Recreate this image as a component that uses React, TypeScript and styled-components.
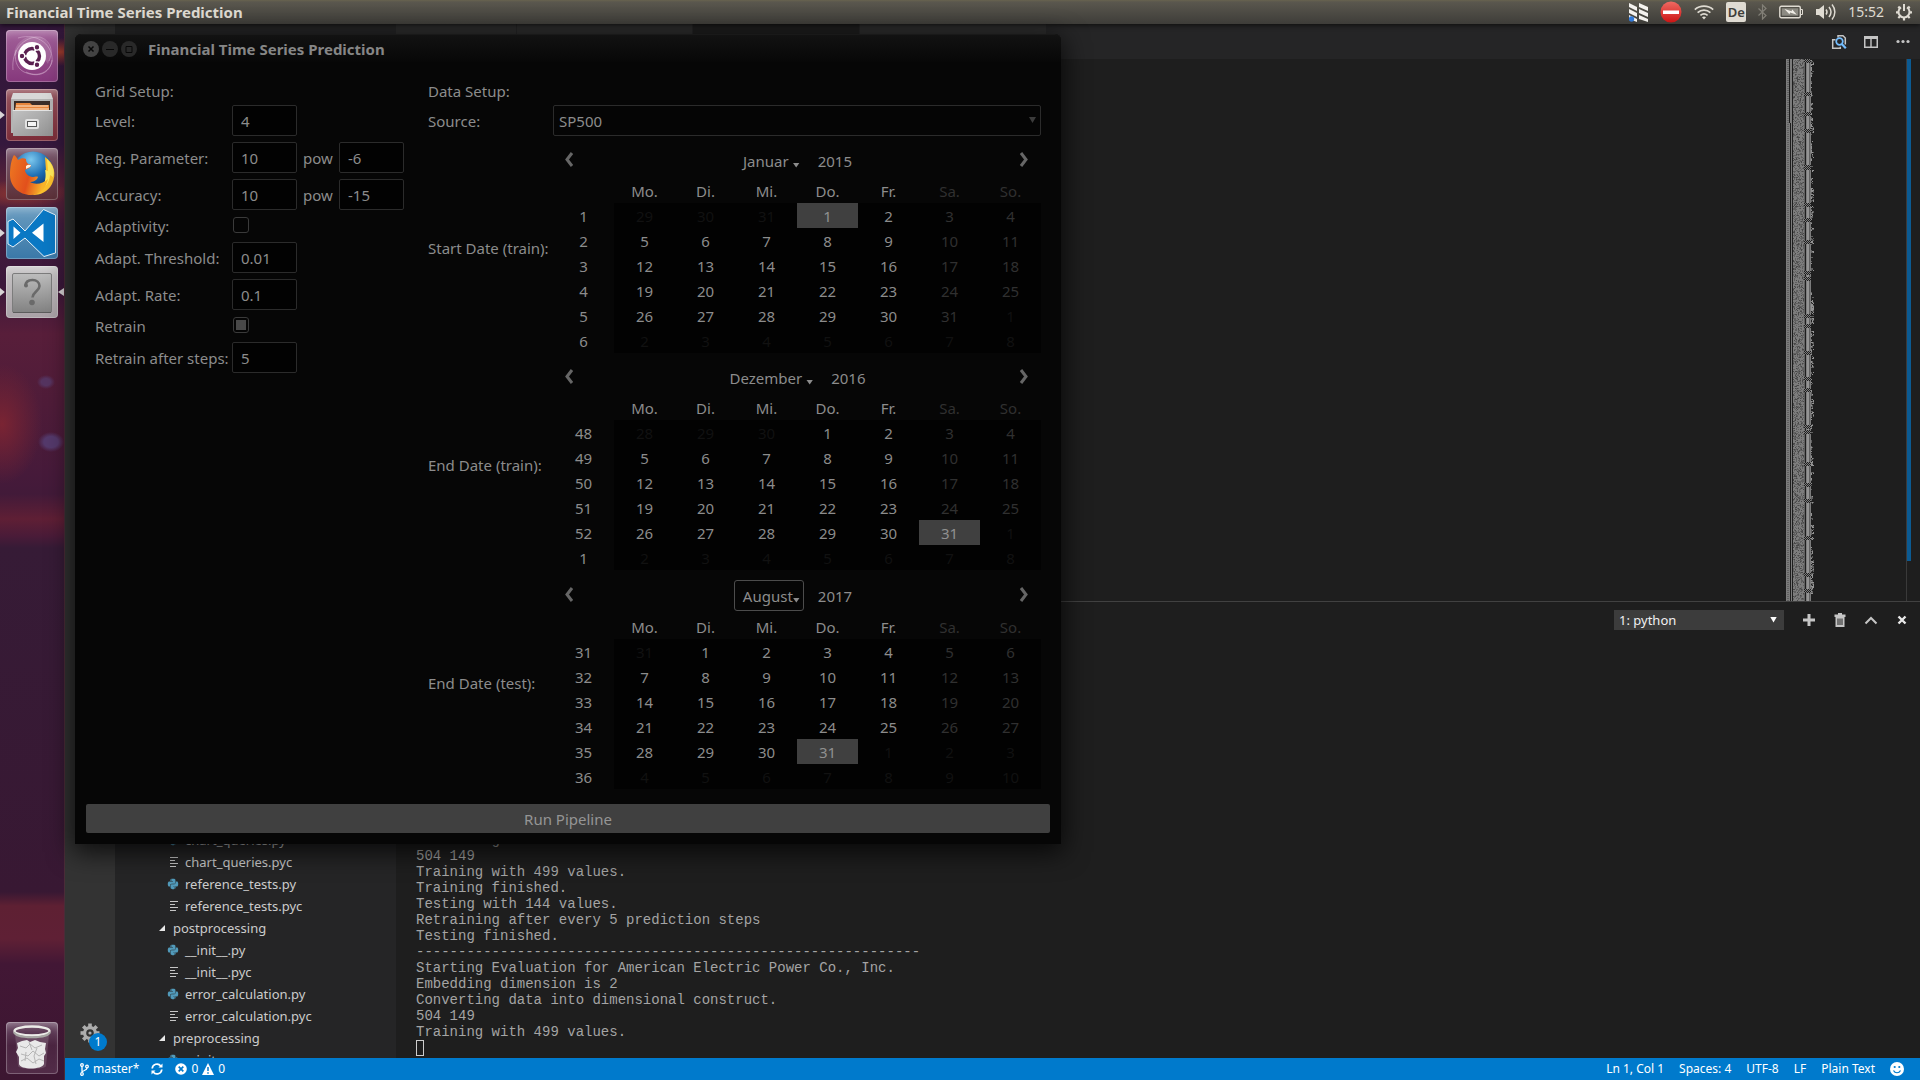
import React from "react";
import styled, { createGlobalStyle, css } from "styled-components";
import { FaPython } from "react-icons/fa";

const GlobalStyle = createGlobalStyle`
  *, *::before, *::after { box-sizing: border-box; }
  body { margin: 0; background: #1e1e1e; overflow: hidden; }
  button, input, select { font: inherit; color: inherit; margin: 0; }
`;

/* ---------- desktop shell ---------- */

const Desktop = styled.div`
  position: relative;
  display: flex;
  flex-direction: column;
  height: 100vh;
  overflow: hidden;
  font-family: "Noto Sans", sans-serif;
  font-size: 14px;
  line-height: 18px;
  color: #dfdbd2;
`;

const TopBar = styled.header`
  position: relative;
  z-index: 1;
  display: flex;
  align-items: center;
  justify-content: space-between;
  flex: none;
  height: 24px;
  padding: 0 8px 0 6px;
  background: linear-gradient(#68634f 0, #5a574e 2px, #3e3d39 100%);
  box-shadow: 0 1px 5px rgba(0, 0, 0, 0.7);
`;

const TopTitle = styled.h1`
  margin: 0;
  font-size: 15px;
  font-weight: 700;
  line-height: 18px;
`;

const Tray = styled.div`
  display: flex;
  align-items: center;
  gap: 12px;

  svg { display: block; }
`;

const KeyboardLayout = styled.button`
  width: 20px;
  height: 20px;
  padding: 0;
  border: 0;
  border-radius: 2px;
  background: #dfdbd2;
  color: #403e3a;
  font-size: 13px;
  font-weight: 600;
  line-height: 20px;
`;

const Workspace = styled.div`
  display: flex;
  flex: 1;
  min-height: 0;
`;

const Launcher = styled.nav`
  display: flex;
  flex-direction: column;
  gap: 7px;
  flex: none;
  width: 65px;
  padding: 6px 6px 6px 0;
  border-right: 1px solid #4a2c38;
  background:
    radial-gradient(9px 7px at 46px 358px, #553460 50%, transparent),
    radial-gradient(13px 10px at 51px 418px, #54396b 55%, transparent),
    radial-gradient(40px 60px at 2px 400px, #7a2433, transparent),
    radial-gradient(40px 14px at 60px 28px, #9b3a2c, transparent),
    radial-gradient(50px 14px at 20px 170px, #8c3430, transparent),
    linear-gradient(
      #33173a 0,
      #35183d 120px,
      #5d2438 165px,
      #431c3d 200px,
      #3b183b 260px,
      #581e3a 310px,
      #4f1c39 380px,
      #461a3a 450px,
      #421a39 470px,
      #5f1f35 495px,
      #4a1b38 512px,
      #361b36 524px,
      #381833 868px,
      #5e2033 882px,
      #5f2035 915px,
      #421735 940px,
      #3c1631 100%
    );
`;

const LaunchSlot = styled.div<{ $last?: boolean }>`
  display: flex;
  align-items: center;
  height: 52px;
  ${(p) => p.$last && css`margin-top: auto;`}
`;

const Pip = styled.span<{ $on?: boolean; $flip?: boolean }>`
  flex: none;
  width: 6px;
  height: 8px;
  background: ${(p) => (p.$on ? "#d8d4d6" : "transparent")};
  clip-path: ${(p) =>
    p.$flip ? "polygon(100% 0, 0 50%, 100% 100%)" : "polygon(0 0, 80% 50%, 0 100%)"};
`;

const Tile = styled.button<{ $bg: string }>`
  flex: none;
  width: 52px;
  height: 52px;
  padding: 0;
  border: 0;
  border-radius: 4px;
  background: ${(p) => p.$bg};
  box-shadow: inset 0 0 0 1px rgba(255, 255, 255, 0.25), inset 0 8px 10px -6px rgba(255, 255, 255, 0.4);

  svg { display: block; }
`;

/* ---------- code editor ---------- */

const Editor = styled.main`
  display: flex;
  flex-direction: column;
  flex: 1;
  min-width: 0;
  font-size: 12px;
`;

const EditorBody = styled.div`
  display: flex;
  flex: 1;
  min-height: 0;
`;

const ActivityBar = styled.aside`
  display: flex;
  flex-direction: column;
  justify-content: flex-end;
  align-items: center;
  flex: none;
  width: 50px;
  padding-bottom: 15px;
  background: #333333;
`;

const ManageButton = styled.button`
  position: relative;
  width: 20px;
  height: 20px;
  padding: 0;
  border: 0;
  background: none;

  svg { display: block; }
`;

const Badge = styled.span`
  position: absolute;
  left: 9px;
  top: 10px;
  width: 18px;
  height: 18px;
  border-radius: 9px;
  background: #007acc;
  color: #fff;
  font-size: 12px;
  line-height: 18px;
  text-align: center;
`;

const Sidebar = styled.aside`
  display: flex;
  flex-direction: column;
  justify-content: flex-end;
  flex: none;
  width: 281px;
  overflow: hidden;
  background: #252526;
`;

const Tree = styled.ul`
  margin: 0 0 -13px;
  padding: 0;
  list-style: none;
`;

const TreeRow = styled.li<{ $folder?: boolean }>`
  display: flex;
  align-items: center;
  gap: ${(p) => (p.$folder ? 8 : 6)}px;
  height: 22px;
  padding-left: ${(p) => (p.$folder ? 44 : 52)}px;
  color: #cccccc;
  font-size: 13px;
  line-height: 22px;
  white-space: nowrap;

  svg { flex: none; color: #519aba; }
`;

const MainColumn = styled.section`
  display: flex;
  flex-direction: column;
  flex: 1;
  min-width: 0;
  background: #1e1e1e;
`;

const TabStrip = styled.div`
  display: flex;
  flex: none;
  height: 35px;
  background: #252526;
`;

const Tab = styled.div<{ $width: number; $active?: boolean }>`
  width: ${(p) => p.$width}px;
  border-right: 1px solid #252526;
  background: ${(p) => (p.$active ? "#1e1e1e" : "#2d2d2d")};
`;

const TabActions = styled.div`
  display: flex;
  align-items: center;
  gap: 16px;
  margin-left: auto;
  padding-right: 9px;
`;

const IconButton = styled.button`
  display: flex;
  align-items: center;
  justify-content: center;
  width: 16px;
  height: 16px;
  padding: 0;
  border: 0;
  background: none;
  color: #c5c5c5;
`;

const CodeArea = styled.div`
  display: flex;
  justify-content: flex-end;
  flex: 1;
  min-height: 0;
  overflow: hidden;
`;

const Minimap = styled.div`
  width: 120px;

  svg { display: block; }
`;

const ScrollTrack = styled.div`
  width: 14px;
  border-left: 1px solid #3a3a3a;
`;

const ScrollMark = styled.div`
  width: 4px;
  height: 502px;
  background: #0b5a92;
`;

const Panel = styled.section`
  display: flex;
  flex-direction: column;
  justify-content: space-between;
  flex: none;
  height: 457px;
  border-top: 1px solid #414141;
  overflow: hidden;
`;

const PanelHeader = styled.div`
  display: flex;
  align-items: center;
  justify-content: flex-end;
  gap: 15px;
  height: 36px;
  padding-right: 10px;
`;

const SelectShell = styled.div<{ $grow?: boolean }>`
  position: relative;
  ${(p) => p.$grow && css`width: 100%;`}
`;

const TerminalSelect = styled.select`
  display: block;
  width: 170px;
  height: 20px;
  padding: 0 5px;
  border: 0;
  appearance: none;
  background: #3c3c3c;
  color: #f0f0f0;
  font-size: 13px;
  line-height: 20px;
`;

const SelectArrow = styled.span<{ $color: string; $right: number; $size: number }>`
  position: absolute;
  right: ${(p) => p.$right}px;
  top: 50%;
  margin-top: -${(p) => p.$size / 2}px;
  width: ${(p) => p.$size}px;
  height: ${(p) => p.$size - 1}px;
  background: ${(p) => p.$color};
  clip-path: polygon(0 0, 100% 0, 50% 100%);
  pointer-events: none;
`;

const PanelIcons = styled.div`
  display: flex;
  align-items: center;
  gap: 15px;
  padding-left: 2px;
`;

const Terminal = styled.pre`
  margin: 0;
  padding: 0 20px 2px;
  color: #a4a4a4;
  font-family: "Liberation Mono", monospace;
  font-size: 14px;
  line-height: 16px;
`;

const Cursor = styled.span`
  display: block;
  width: 8px;
  height: 16px;
  border: 1px solid #cccccc;
`;

const StatusBar = styled.footer`
  display: flex;
  align-items: center;
  justify-content: space-between;
  flex: none;
  height: 22px;
  padding: 0 16px 0 15px;
  background: #007acc;
  color: #ffffff;
  line-height: 22px;
`;

const StatusGroup = styled.div<{ $gap: number }>`
  display: flex;
  gap: ${(p) => p.$gap}px;
`;

const StatusItem = styled.button`
  display: flex;
  align-items: center;
  gap: 4px;
  padding: 0;
  border: 0;
  background: none;
  font-size: 12px;
  line-height: 22px;
`;

/* ---------- settings window ---------- */

const Window = styled.section`
  position: absolute;
  left: 75px;
  top: 34px;
  z-index: 2;
  width: 986px;
  border-radius: 6px 6px 0 0;
  background: #060606;
  color: #8c8c8c;
  font-size: 15px;
  box-shadow: 0 6px 26px 2px rgba(0, 0, 0, 0.75);
`;

const TitleBar = styled.header`
  display: flex;
  align-items: center;
  gap: 3px;
  height: 28px;
  padding: 0 8px;
  border-top: 1px solid #191919;
  border-radius: 6px 6px 0 0;
  background: linear-gradient(#121212, #070707);
`;

const WindowButton = styled.button<{ $strong?: boolean }>`
  display: flex;
  align-items: center;
  justify-content: center;
  width: 16px;
  height: 16px;
  padding: 0;
  border: 0;
  border-radius: 8px;
  background: ${(p) => (p.$strong ? "#434343" : "#292929")};
  color: #080808;
`;

const WindowTitle = styled.h2`
  margin: 0 0 0 8px;
  color: #868686;
  font-size: 15px;
  font-weight: 700;
  line-height: 18px;
`;

const Form = styled.form`
  display: flex;
  flex-direction: column;
  gap: 15px;
  padding: 19px 11px 11px;
`;

const Columns = styled.div`
  display: flex;
  gap: 24px;
  padding: 0 9px;
`;

const GridSetup = styled.div`
  display: grid;
  grid-template-columns: 131px 65px 30px 65px;
  align-content: start;
  align-items: center;
  gap: 6px;
`;

const DataSetup = styled.div`
  display: grid;
  grid-template-columns: 119px 1fr;
  align-content: start;
  align-items: center;
  gap: 6px;
  flex: 1;
`;

const Heading = styled.h3`
  grid-column: 1 / -1;
  height: 18px;
  margin: 0;
  font-size: 15px;
  font-weight: 400;
  line-height: 20px;
`;

const Label = styled.label`
  grid-column: 1;
  white-space: nowrap;
`;

const Pow = styled.span`
  text-align: center;
`;

const Field = styled.input`
  width: 100%;
  height: 31px;
  padding: 0 8px;
  border: 1px solid #2b2b2b;
  border-radius: 2px;
  background: #020202;
`;

const Check = styled.input`
  display: flex;
  align-items: center;
  justify-content: center;
  width: 16px;
  height: 16px;
  appearance: none;
  border: 1px solid #3a3a3a;
  border-radius: 3px;
  background: #050505;

  &:checked::before {
    content: "";
    width: 10px;
    height: 10px;
    background: #484848;
  }
`;

const CheckRow = styled.div`
  display: flex;
  height: 20px;
  padding: 1px;
`;

const SourceSelect = styled.select`
  display: block;
  width: 100%;
  height: 31px;
  padding: 0 5px;
  border: 1px solid #2b2b2b;
  border-radius: 2px;
  appearance: none;
  background: #050505;
`;

const CalendarNav = styled.div<{ $focused?: boolean }>`
  display: flex;
  align-items: center;
  justify-content: space-between;
  height: ${(p) => (p.$focused ? 38 : 36)}px;
  padding: 0 11px;
`;

const StepButton = styled.button`
  width: 12px;
  height: 20px;
  padding: 0;
  border: 0;
  background: none;

  svg { display: block; }
`;

const MonthYear = styled.div`
  display: flex;
  align-items: center;
  gap: 6px;
`;

const MonthButton = styled.button<{ $focused?: boolean }>`
  position: relative;
  height: 31px;
  padding: 2px ${(p) => (p.$focused ? 10 : 14)}px 0 8px;
  border: 1px solid ${(p) => (p.$focused ? "#4c4c4c" : "transparent")};
  border-radius: 3px;
  background: none;
`;

const MonthArrow = styled.span`
  position: absolute;
  right: 3px;
  top: 17px;
  width: 7px;
  height: 5px;
  background: #8c8c8c;
  clip-path: polygon(0 0, 100% 0, 50% 100%);
`;

const YearButton = styled.button`
  height: 31px;
  padding: 2px 8px 0;
  border: 0;
  background: none;
`;

const CalendarTable = styled.table`
  width: 100%;
  table-layout: fixed;
  border-collapse: collapse;
  text-align: center;
`;

const cellSize = css`
  height: 25px;
  padding: 0;
  font-weight: 400;
  line-height: 18px;
`;

const HeadCell = styled.th<{ $dim?: boolean }>`
  ${cellSize}
  color: ${(p) => (p.$dim ? "#303030" : "#8c8c8c")};
`;

type Tone = "plain" | "weekend" | "outside" | "selected";

const dayColor: Record<Tone, string> = {
  plain: "#8c8c8c",
  weekend: "#303030",
  outside: "#111111",
  selected: "#909090",
};

const DayCell = styled.td<{ $tone: Tone }>`
  ${cellSize}
  background: ${(p) => (p.$tone === "selected" ? "#404040" : "#020202")};
  color: ${(p) => dayColor[p.$tone]};
`;

const RunButton = styled.button`
  height: 29px;
  padding: 0;
  border: 0;
  border-radius: 2px;
  background: #404040;
  color: #959595;
`;

/* ---------- data ---------- */

const WEEKDAYS = ["Mo.", "Di.", "Mi.", "Do.", "Fr.", "Sa.", "So."];

type CalendarProps = {
  month: string;
  year: number;
  weeks: number[];
  lead: number[];
  length: number;
  selected: number;
  focused?: boolean;
};

const TREE: { name: string; kind: "py" | "pyc" | "folder" }[] = [
  { name: "chart_queries.py", kind: "py" },
  { name: "chart_queries.pyc", kind: "pyc" },
  { name: "reference_tests.py", kind: "py" },
  { name: "reference_tests.pyc", kind: "pyc" },
  { name: "postprocessing", kind: "folder" },
  { name: "__init__.py", kind: "py" },
  { name: "__init__.pyc", kind: "pyc" },
  { name: "error_calculation.py", kind: "py" },
  { name: "error_calculation.pyc", kind: "pyc" },
  { name: "preprocessing", kind: "folder" },
  { name: "__init__.py", kind: "py" },
];

const LOG = [
  "Converting data into dimensional construct.",
  "504 149",
  "Training with 499 values.",
  "Training finished.",
  "Testing with 144 values.",
  "Retraining after every 5 prediction steps",
  "Testing finished.",
  "-".repeat(60),
  "Starting Evaluation for American Electric Power Co., Inc.",
  "Embedding dimension is 2",
  "Converting data into dimensional construct.",
  "504 149",
  "Training with 499 values.",
].join("\n");

/* ---------- drawings ---------- */

/* Code overview: one path per shade, built from a seeded generator. */
function buildOverview(rows: number) {
  let seed = 7;
  const rnd = () => {
    seed = (seed * 1103515245 + 12345) % 2147483648;
    return seed / 2147483648;
  };
  const shades = ["", "", "", ""];
  const put = (s: number, x: number, y: number) => {
    shades[s] += `M${x} ${y}h1v1h-1z`;
  };
  let edge = 25;
  for (let y = 0; y < rows; y++) {
    const shift = y < 64 ? 0 : 1;
    const jumpy = y % 37 > 32 || y % 53 < 4;
    if (rnd() > 0.6) edge = 25 + Math.floor(rnd() * 4);
    for (let x = 0; x < edge; x++) {
      if (x < 3) put(y % 2 && x !== 0 ? 1 : 2, x, y);
      else if (x === 3 + shift || x === 6) continue;
      else if (x < 7) put(2, x, y);
      else if (x < 18) put(rnd() > 0.45 ? 2 : rnd() > 0.25 ? 1 : 0, x, y);
      else if (x < 25) {
        if (jumpy) { if ((x + y) % 2) put(2, x, y); }
        else if (x === 18) put(1, x, y);
        else if (x === 21 || x === 22) put(3, x, y);
        else if (x !== 19) put(x % 2 ? 1 : 2, x, y);
      } else if (rnd() > 0.35) put(rnd() > 0.5 ? 3 : 1, x, y);
    }
  }
  return shades;
}
const OVERVIEW = buildOverview(542);
const OVERVIEW_FILL = ["#484848", "#606060", "#7c7c7c", "#949494"];

const UbuntuIcon = () => (
  <svg width="52" height="52" viewBox="0 0 52 52" fill="none">
    <path d="M7 40C5 20 18 6 34 7c10 3 14 14 9 24M12 8c20-6 36 8 34 24-4 12-16 15-26 10M46 30c-2 14-14 18-28 12C10 38 8 28 10 20" stroke="#d9b3d3" strokeOpacity=".5" />
    <path d="M8 26C8 12 22 2 36 8c10 6 10 18 6 26L26 12z" fill="#fff" fillOpacity=".14" />
    <circle cx="26" cy="26" r="14" fill="#fff" />
    <circle cx="26" cy="26" r="7.5" stroke="#5a2050" strokeWidth="3.4" />
    <path d="M26 26L12 26M26 26L33 14M26 26L33 38" stroke="#fff" strokeWidth="1.6" />
    <circle cx="26" cy="26" r="5" fill="#fff" />
    <g fill="#5a2050" stroke="#fff" strokeWidth="1.2">
      <circle cx="16" cy="26" r="2.8" /><circle cx="31" cy="17.3" r="2.8" /><circle cx="31" cy="34.7" r="2.8" />
    </g>
  </svg>
);

const FilesIcon = () => (
  <svg width="52" height="52" viewBox="0 0 52 52">
    <defs>
      <linearGradient id="cab" x1="0" y1="0" x2="1" y2="1">
        <stop offset="0" stopColor="#c2c2c2" /><stop offset="1" stopColor="#929292" />
      </linearGradient>
    </defs>
    <path d="M7 4h38l2 6v34H5V10z" fill="#d8d8d8" />
    <path d="M5 10h42v34H5z" fill="#b4b4b4" />
    <path d="M8 12h36v10H8z" fill="#3a2c28" />
    <path d="M10 14h14l2 2h17v6H9z" fill="#e8863c" />
    <path d="M10 17h32M9 20h34" stroke="#fbe4cc" strokeWidth="1.2" />
    <path d="M6 21h40l1 2v24H7V23z" fill="url(#cab)" />
    <path d="M7 21.500h39" stroke="#e4e4e4" />
    <rect x="19" y="30" width="14" height="10" rx="2" fill="#e2e2e2" />
    <rect x="21.500" y="32.500" width="9" height="5" fill="#f4f4f4" stroke="#555" />
  </svg>
);

const FirefoxIcon = () => (
  <svg width="52" height="52" viewBox="0 0 52 52">
    <defs>
      <radialGradient id="globe" cx=".45" cy=".2" r=".8">
        <stop offset="0" stopColor="#7cc8ee" /><stop offset=".5" stopColor="#1d6fb4" /><stop offset="1" stopColor="#0b2a62" />
      </radialGradient>
      <linearGradient id="fox" x1="0" y1="0" x2="1" y2=".3">
        <stop offset="0" stopColor="#ee7a22" /><stop offset=".6" stopColor="#e2501c" /><stop offset="1" stopColor="#f8b42a" />
      </linearGradient>
    </defs>
    <circle cx="27" cy="24" r="20.500" fill="url(#globe)" />
    <path d="M39 9c9 6 12 17 7 27-4 8-12 11-19 11l6-7c6-4 8-10 7-17z" fill="#fbc02d" />
    <path d="M41 11c6 6 8 12 6 18l-3-2c0 5-3 10-7 13 3-8 3-14 2-18l3 1z" fill="#ffe95a" />
    <path d="M8 7c2 1 3 3 4 5 3-2 6-2 8-1 0 3 1 5 5 6 0 3-4 4-6 5 0 3 3 6 7 7 3 0 5-1 6 0-1 4-6 5-8 5 5 3 13 2 18-3-2 10-9 16-17 16C13 47 4 38 4 27 4 20 5 12 8 7z" fill="url(#fox)" />
    <path d="M20 18c2-2 4-1 5-1 0 2-3 3-5 4z" fill="#fff0dc" />
  </svg>
);

const CodeIcon = () => (
  <svg width="52" height="52" viewBox="0 0 52 52">
    <path d="M2 14.500L7 12l12 12L37.500 2.500l12 5.500v38L38 49.500 19 31 7 40l-5-3z" fill="#0a78c4" stroke="#e6f2fa" />
    <path d="M7.500 19.500v12.500l7-6.200zM26 25.800l11.500-9.300V35z" fill="#fff" />
  </svg>
);

const UnknownIcon = () => (
  <svg width="52" height="52" viewBox="0 0 52 52">
    <defs>
      <linearGradient id="unk" x1="0" y1="0" x2="0" y2="1">
        <stop offset="0" stopColor="#bdbdbd" /><stop offset="1" stopColor="#828282" />
      </linearGradient>
    </defs>
    <rect x="6.500" y="7.500" width="39" height="39" rx="1.500" fill="url(#unk)" stroke="#7c7c7c" />
    <path d="M7 46.500h38" stroke="#5c5c5c" />
    <path d="M19.500 20c0-4 3-6 7-6s7 2.500 7 6c0 5-6.500 5.500-7 11.500" fill="none" stroke="#6a6a6a" strokeWidth="2.600" />
    <circle cx="20" cy="19.500" r="2" fill="#6a6a6a" /><circle cx="26" cy="36.500" r="2.800" fill="#6a6a6a" />
  </svg>
);

const BinIcon = () => (
  <svg width="52" height="52" viewBox="0 0 52 52">
    <path d="M9 12l3 32c1 4 27 4 28 0l3-32z" fill="#fff" fillOpacity=".14" />
    <path d="M11 21l5-2 5-1 3 2 5-2 5 2 6 1-1 6 1 4-2 3v8c-2 6-24 6-25 0v-7l-3-5 2-4z" fill="#e9e9e9" />
    <path d="M14 24l6 2 4-4 5 4 7-3M15 32l7 2 5-5 6 5 5-3M15 39l6-3 6 5 6-4 5 2M23 20l3 8M31 26l-3 8 2 8M20 30l-1 9" stroke="#b5b5b5" fill="none" />
    <ellipse cx="26" cy="9" rx="17.500" ry="4.500" fill="none" stroke="#ecece8" strokeWidth="2.400" />
    <path d="M8 10c2 7 34 7 36 0" fill="none" stroke="#a8a8a4" strokeWidth="2" />
  </svg>
);

const Cog = ({ size, color, hole, teeth = 8 }: { size: number; color: string; hole: string; teeth?: number }) => (
  <svg width={size} height={size} viewBox="0 0 20 20">
    {Array.from({ length: teeth }, (_, i) => (
      <rect key={i} x="8.200" y="0.500" width="3.600" height="5" fill={color} transform={`rotate(${(i * 360) / teeth} 10 10)`} />
    ))}
    <circle cx="10" cy="10" r="7" fill={color} />
    <circle cx="10" cy="10" r="3.800" fill={hole} />
    <circle cx="10" cy="10" r="1.600" fill={color} />
  </svg>
);

const TrayIcons = () => (
  <Tray>
    <svg width="19" height="20" viewBox="0 0 19 20">
      <path d="M0 1l8 4v4L0 5zM0 7l8 4v4L0 11zM0 13l8 4v3L0 17zM10 1l9 4v4l-9-4zM10 7l9 4v4l-9-4zM10 13l9 4v3l-9-3z" fill="#f4f2ee" />
      <circle cx="2.500" cy="17" r="2.700" fill="#2f78d8" />
    </svg>
    <svg width="22" height="22" viewBox="0 0 22 22">
      <defs>
        <linearGradient id="stop" x1="0" y1="0" x2="0" y2="1">
          <stop offset="0" stopColor="#ef6a62" /><stop offset="1" stopColor="#cc1414" />
        </linearGradient>
      </defs>
      <circle cx="11" cy="11" r="10.500" fill="url(#stop)" />
      <rect x="3" y="9.500" width="16" height="3.500" fill="#fff" />
    </svg>
    <svg width="20" height="16" viewBox="0 0 20 16" fill="none" stroke="#dfdbd2" strokeWidth="1.700">
      <path d="M.8 5.600c5.200-4.600 13.200-4.600 18.400 0M3.600 8.600c3.800-3.200 9-3.200 12.800 0M6.400 11.400c2.200-1.800 5-1.800 7.200 0" />
      <path d="M10 15.500l-2-2.300c1.200-.8 2.800-.8 4 0z" fill="#dfdbd2" stroke="none" />
    </svg>
    <KeyboardLayout type="button">De</KeyboardLayout>
    <svg width="9" height="16" viewBox="0 0 9 16" fill="none" stroke="#827f77" strokeWidth="1.200">
      <path d="M.5 4.500l7.500 7-3.500 3.500V1L8 4.500l-7.500 7" />
    </svg>
    <svg width="25" height="14" viewBox="0 0 25 14">
      <rect x=".8" y="1.300" width="20.500" height="11.400" rx="1.500" fill="none" stroke="#dfdbd2" strokeWidth="1.400" />
      <path d="M22 4.500h1.500v5H22" fill="none" stroke="#dfdbd2" />
      <rect x="2.800" y="3.300" width="16.500" height="7.400" fill="#8c8a82" />
      <path d="M5.500 4l7 2.300 .8-1.800 4.500 5.200-6.600-2.200-.8 1.700z" fill="#f0ede6" />
    </svg>
    <svg width="20" height="18" viewBox="0 0 20 18">
      <path d="M0 6h3l5-4v14l-5-4H0z" fill="#dfdbd2" />
      <path d="M10 6.500c1.200 1.500 1.200 3.500 0 5M13 4c2.400 3 2.400 7 0 10M16 1.500c3.800 4.500 3.800 10.500 0 15" fill="none" stroke="#dfdbd2" strokeWidth="1.500" />
    </svg>
    <time>15:52</time>
    <svg width="16" height="18" viewBox="0 0 16 18" fill="none" stroke="#dfdbd2">
      <path d="M5 4.300a5.500 5.500 0 1 0 6 0" strokeWidth="2" />
      <path d="M8 1v7" strokeWidth="2" />
      <path d="M0 9.300h2.500M13.500 9.300H16M2.300 3.600l1.800 1.800M13.700 3.600l-1.800 1.800M2.300 15l1.800-1.800M13.700 15l-1.800-1.800M8 15v2.500" strokeWidth="2.200" />
    </svg>
  </Tray>
);

const FolderArrow = () => (
  <svg width="6" height="6" viewBox="0 0 6 6"><path d="M6 0v6H0z" fill="#e8e8e8" /></svg>
);

const TextFileIcon = () => (
  <svg width="12" height="12" viewBox="0 0 12 12" stroke="#c5c5c5">
    <path d="M3 1.500h8M3 4.500h5M3 7.500h8M3 10.500h6" />
  </svg>
);

const Chevron = ({ right }: { right?: boolean }) => (
  <svg width="12" height="20" viewBox="0 0 12 20" fill="none" stroke="#666666" strokeWidth="3">
    <path d={right ? "M3 3l5 6.500L3 16" : "M8 3L3 9.500 8 16"} />
  </svg>
);

/* ---------- parts ---------- */

const Calendar = ({ month, year, weeks, lead, length, selected, focused }: CalendarProps) => {
  const cells: { day: number; outside: boolean }[] = [];
  lead.forEach((day) => cells.push({ day, outside: true }));
  for (let d = 1; d <= length; d++) cells.push({ day: d, outside: false });
  for (let d = 1; cells.length < 42; d++) cells.push({ day: d, outside: true });

  const tone = (i: number): Tone => {
    const { day, outside } = cells[i];
    if (outside) return "outside";
    if (day === selected) return "selected";
    return i % 7 > 4 ? "weekend" : "plain";
  };

  return (
    <div>
      <CalendarNav $focused={focused}>
        <StepButton type="button" aria-label="Previous month"><Chevron /></StepButton>
        <MonthYear>
          <MonthButton type="button" aria-haspopup="menu" $focused={focused}>
            {month}
            <MonthArrow />
          </MonthButton>
          <YearButton type="button">{year}</YearButton>
        </MonthYear>
        <StepButton type="button" aria-label="Next month"><Chevron right /></StepButton>
      </CalendarNav>
      <CalendarTable>
        <thead>
          <tr>
            <HeadCell />
            {WEEKDAYS.map((d, i) => <HeadCell key={d} $dim={i > 4}>{d}</HeadCell>)}
          </tr>
        </thead>
        <tbody>
          {weeks.map((w, row) => (
            <tr key={w}>
              <HeadCell scope="row">{w}</HeadCell>
              {cells.slice(row * 7, row * 7 + 7).map((c, col) => (
                <DayCell key={col} $tone={tone(row * 7 + col)}>{c.day}</DayCell>
              ))}
            </tr>
          ))}
        </tbody>
      </CalendarTable>
    </div>
  );
};

const TextRow = ({ id, label, value, power }: { id: string; label: string; value: string; power?: string }) => (
  <>
    <Label htmlFor={id}>{label}</Label>
    <Field id={id} defaultValue={value} />
    {power && (
      <>
        <Pow>pow</Pow>
        <Field aria-label={`${label} exponent`} defaultValue={power} />
      </>
    )}
  </>
);

const CheckField = ({ id, label, checked }: { id: string; label: string; checked?: boolean }) => (
  <>
    <Label htmlFor={id}>{label}</Label>
    <CheckRow><Check id={id} type="checkbox" defaultChecked={checked} /></CheckRow>
  </>
);

const SettingsWindow = () => (
  <Window>
    <TitleBar>
      <WindowButton type="button" aria-label="Close" $strong>
        <svg width="8" height="8" viewBox="0 0 8 8" stroke="currentColor" strokeWidth="1.500"><path d="M1.500 1.500l5 5M6.500 1.500l-5 5" /></svg>
      </WindowButton>
      <WindowButton type="button" aria-label="Minimize">
        <svg width="8" height="8" viewBox="0 0 8 8" stroke="currentColor"><path d="M0 4.500h8" /></svg>
      </WindowButton>
      <WindowButton type="button" aria-label="Maximize">
        <svg width="8" height="8" viewBox="0 0 8 8" stroke="currentColor" fill="none"><path d="M1 1.500h6v6H1z" /></svg>
      </WindowButton>
      <WindowTitle>Financial Time Series Prediction</WindowTitle>
    </TitleBar>
    <Form onSubmit={(e) => e.preventDefault()}>
      <Columns>
        <GridSetup>
          <Heading>Grid Setup:</Heading>
          <TextRow id="level" label="Level:" value="4" />
          <TextRow id="reg" label="Reg. Parameter:" value="10" power="-6" />
          <TextRow id="accuracy" label="Accuracy:" value="10" power="-15" />
          <CheckField id="adaptivity" label="Adaptivity:" />
          <TextRow id="threshold" label="Adapt. Threshold:" value="0.01" />
          <TextRow id="rate" label="Adapt. Rate:" value="0.1" />
          <CheckField id="retrain" label="Retrain" checked />
          <TextRow id="steps" label="Retrain after steps:" value="5" />
        </GridSetup>
        <DataSetup>
          <Heading>Data Setup:</Heading>
          <Label htmlFor="source">Source:</Label>
          <SelectShell $grow>
            <SourceSelect id="source"><option>SP500</option></SourceSelect>
            <SelectArrow $color="#3c3c3c" $right={5} $size={7} />
          </SelectShell>
          <Label as="span">Start Date (train):</Label>
          <Calendar month="Januar" year={2015} weeks={[1, 2, 3, 4, 5, 6]} lead={[29, 30, 31]} length={31} selected={1} />
          <Label as="span">End Date (train):</Label>
          <Calendar month="Dezember" year={2016} weeks={[48, 49, 50, 51, 52, 1]} lead={[28, 29, 30]} length={31} selected={31} />
          <Label as="span">End Date (test):</Label>
          <Calendar month="August" year={2017} weeks={[31, 32, 33, 34, 35, 36]} lead={[31]} length={31} selected={31} focused />
        </DataSetup>
      </Columns>
      <RunButton type="submit">Run Pipeline</RunButton>
    </Form>
  </Window>
);

export default function App() {
  return (
    <Desktop>
      <GlobalStyle />
      <TopBar>
        <TopTitle>Financial Time Series Prediction</TopTitle>
        <TrayIcons />
      </TopBar>
      <Workspace>
        <Launcher>
          <LaunchSlot><Pip /><Tile $bg="linear-gradient(#a2629a, #86387c)" aria-label="Search"><UbuntuIcon /></Tile></LaunchSlot>
          <LaunchSlot><Pip $on /><Tile $bg="linear-gradient(#94525c, #7c2c38)" aria-label="Files"><FilesIcon /></Tile></LaunchSlot>
          <LaunchSlot><Pip /><Tile $bg="linear-gradient(#7c5a70, #5c3038)" aria-label="Firefox"><FirefoxIcon /></Tile></LaunchSlot>
          <LaunchSlot><Pip $on /><Tile $bg="linear-gradient(#6a9cc0, #3a78a8)" aria-label="Code"><CodeIcon /></Tile></LaunchSlot>
          <LaunchSlot><Pip $on /><Tile $bg="linear-gradient(#c8c6c7, #a9a1a6)" aria-label="Application"><UnknownIcon /></Tile><Pip $on $flip /></LaunchSlot>
          <LaunchSlot $last><Pip /><Tile $bg="linear-gradient(#6a4a64, #4a2440 45%, #522c48)" aria-label="Trash"><BinIcon /></Tile></LaunchSlot>
        </Launcher>
        <Editor>
          <EditorBody>
            <ActivityBar>
              <ManageButton type="button">
                <Cog size={20} color="#adadad" hole="#333333" />
                <Badge>1</Badge>
              </ManageButton>
            </ActivityBar>
            <Sidebar>
              <Tree>
                {TREE.map((t, i) => (
                  <TreeRow key={i} $folder={t.kind === "folder"}>
                    {t.kind === "folder" ? <FolderArrow /> : t.kind === "py" ? <FaPython size={12} /> : <TextFileIcon />}
                    {t.name}
                  </TreeRow>
                ))}
              </Tree>
            </Sidebar>
            <MainColumn>
              <TabStrip>
                <Tab $width={121} />
                <Tab $width={176} />
                <Tab $width={167} $active />
                <Tab $width={187} />
                <TabActions>
                  <IconButton type="button" aria-label="Open preview">
                    <svg width="16" height="16" viewBox="0 0 16 16" fill="none">
                      <path d="M4.500 5.700H1.700v8.600h7.600v-1.500M7 3.500V1.700h5l2.300 2.300v6.500" stroke="#c5c5c5" strokeWidth="1.500" />
                      <circle cx="8.500" cy="7.500" r="3.300" stroke="#75beff" strokeWidth="1.700" />
                      <path d="M10.800 10l4 4.300" stroke="#75beff" strokeWidth="2.200" />
                    </svg>
                  </IconButton>
                  <IconButton type="button" aria-label="Split editor">
                    <svg width="16" height="16" viewBox="0 0 16 16" fill="#c5c5c5">
                      <path d="M1 2h14v12H1zM2.500 5v7.500h4.800V5zM8.700 5v7.500h4.800V5z" fillRule="evenodd" />
                    </svg>
                  </IconButton>
                  <IconButton type="button" aria-label="More actions">
                    <svg width="16" height="16" viewBox="0 0 16 16" fill="#c5c5c5">
                      <circle cx="3" cy="7.500" r="1.600" /><circle cx="8" cy="7.500" r="1.600" /><circle cx="13" cy="7.500" r="1.600" />
                    </svg>
                  </IconButton>
                </TabActions>
              </TabStrip>
              <CodeArea>
                <Minimap>
                  <svg width="30" height="542" shapeRendering="crispEdges">
                    {OVERVIEW.map((d, i) => <path key={i} d={d} fill={OVERVIEW_FILL[i]} />)}
                  </svg>
                </Minimap>
                <ScrollTrack><ScrollMark /></ScrollTrack>
              </CodeArea>
              <Panel>
                <PanelHeader>
                  <SelectShell>
                    <TerminalSelect aria-label="Terminal"><option>1: python</option></TerminalSelect>
                    <SelectArrow $color="#ffffff" $right={7} $size={7} />
                  </SelectShell>
                  <PanelIcons>
                    <IconButton type="button" aria-label="New terminal">
                      <svg width="12" height="12" viewBox="0 0 12 12"><path d="M4.500 0h3v4.500H12v3H7.500V12h-3V7.500H0v-3h4.500z" fill="#c5c5c5" /></svg>
                    </IconButton>
                    <IconButton type="button" aria-label="Kill terminal">
                      <svg width="12" height="14" viewBox="0 0 12 14" fill="#c5c5c5">
                        <path d="M4 0h4v1.500h3.500V4H.500V1.500H4zM1.500 4h9v10h-9zM3.500 5.500v6.500h1V5.500zM5.500 5.500v6.500h1V5.500zM7.500 5.500v6.500h1V5.500z" fillRule="evenodd" />
                      </svg>
                    </IconButton>
                    <IconButton type="button" aria-label="Maximize panel">
                      <svg width="14" height="9" viewBox="0 0 14 9" fill="none" stroke="#c5c5c5" strokeWidth="2"><path d="M1.500 7.500L7 2l5.500 5.500" /></svg>
                    </IconButton>
                    <IconButton type="button" aria-label="Close panel">
                      <svg width="10" height="10" viewBox="0 0 10 10" stroke="#e8e8e8" strokeWidth="2.400"><path d="M1.500 1.500l7 7M8.500 1.500l-7 7" /></svg>
                    </IconButton>
                  </PanelIcons>
                </PanelHeader>
                <Terminal>
                  {LOG}
                  <Cursor />
                </Terminal>
              </Panel>
            </MainColumn>
          </EditorBody>
          <StatusBar>
            <StatusGroup $gap={12}>
              <StatusItem type="button">
                <svg width="9" height="13" viewBox="0 0 9 13" fill="none" stroke="#fff" strokeWidth="1.300">
                  <circle cx="2" cy="2" r="1.300" /><circle cx="2" cy="11" r="1.300" /><circle cx="7" cy="3.500" r="1.300" />
                  <path d="M2 3.500v6M7 5c0 3-5 2-5 4.500" />
                </svg>
                master*
              </StatusItem>
              <StatusItem type="button" aria-label="Synchronize">
                <svg width="12" height="12" viewBox="0 0 12 12" fill="none" stroke="#fff" strokeWidth="1.700">
                  <path d="M1.200 5.500A4.800 4.800 0 0 1 9.800 3M10.800 6.500A4.800 4.800 0 0 1 2.200 9" />
                  <path d="M11.500.5v4h-4zM.5 11.500v-4h4z" fill="#fff" stroke="none" />
                </svg>
              </StatusItem>
              <StatusItem type="button">
                <svg width="12" height="12" viewBox="0 0 12 12"><circle cx="6" cy="6" r="5.800" fill="#fff" /><path d="M3.700 3.700l4.600 4.600M8.300 3.700L3.700 8.300" stroke="#007acc" strokeWidth="1.700" /></svg>
                0
                <svg width="12" height="12" viewBox="0 0 12 12"><path d="M6 0l6 12H0z" fill="#fff" /><path d="M6 4v4M6 9.200v1.500" stroke="#007acc" strokeWidth="1.500" /></svg>
                0
              </StatusItem>
            </StatusGroup>
            <StatusGroup $gap={15}>
              <StatusItem type="button">Ln 1, Col 1</StatusItem>
              <StatusItem type="button">Spaces: 4</StatusItem>
              <StatusItem type="button">UTF-8</StatusItem>
              <StatusItem type="button">LF</StatusItem>
              <StatusItem type="button">Plain Text</StatusItem>
              <StatusItem type="button" aria-label="Feedback">
                <svg width="14" height="14" viewBox="0 0 14 14">
                  <circle cx="7" cy="7" r="7" fill="#fff" />
                  <path d="M3.500 8.500c1.500 3 5.500 3 7 0" stroke="#007acc" strokeWidth="1.200" fill="none" />
                  <circle cx="4.700" cy="5" r="1.100" fill="#007acc" /><circle cx="9.300" cy="5" r="1.100" fill="#007acc" />
                </svg>
              </StatusItem>
            </StatusGroup>
          </StatusBar>
        </Editor>
      </Workspace>
      <SettingsWindow />
    </Desktop>
  );
}
